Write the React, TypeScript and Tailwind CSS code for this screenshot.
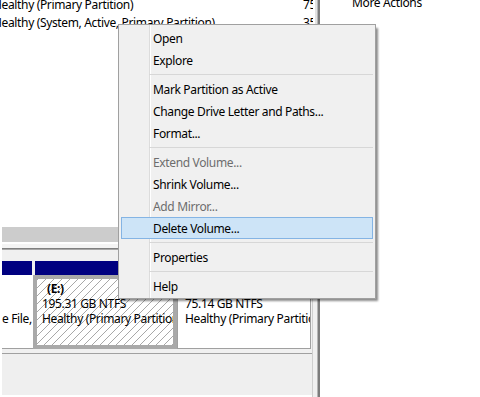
import React from 'react';

type Item = { t: string; dis?: boolean; hl?: boolean } | 'sep';

const items: Item[] = [
  { t: 'Open' },
  { t: 'Explore' },
  'sep',
  { t: 'Mark Partition as Active' },
  { t: 'Change Drive Letter and Paths...' },
  { t: 'Format...' },
  'sep',
  { t: 'Extend Volume...', dis: true },
  { t: 'Shrink Volume...' },
  { t: 'Add Mirror...', dis: true },
  { t: 'Delete Volume...', hl: true },
  'sep',
  { t: 'Properties' },
  'sep',
  { t: 'Help' },
];

function ContextMenu() {
  return (
    <div className="absolute left-[118px] top-[24px] w-[258px] h-[275px] border border-[#a0a0a0] pt-[2px] pb-[1px] flex flex-col bg-[#f0f0f0] bg-[image:linear-gradient(to_right,#f0f0f0_30px,#dcdcdc_30px,#dcdcdc_31px,#ffffff_31px,#ffffff_32px,#f0f0f0_32px)] shadow-[3px_3px_2px_-1px_rgba(0,0,0,0.45)]">
      {items.map((it, i) =>
        it === 'sep' ? (
          <div key={i} className="h-[7px] ml-[30px] mr-[2px] flex flex-col pt-[3px]">
            <div className="h-[1px] bg-[#d7d7d7]" />
          </div>
        ) : (
          <div
            key={i}
            className={
              it.hl
                ? 'h-[22px] mx-[2px] pl-[31px] flex items-center border border-[#84b4e4] bg-[#cde4f7] text-black'
                : it.dis
                ? 'h-[22px] mx-[2px] pl-[31px] flex items-center border border-transparent text-[#6d6d6d]'
                : 'h-[22px] mx-[2px] pl-[31px] flex items-center border border-transparent text-black'
            }
          >
            {it.t}
          </div>
        )
      )}
    </div>
  );
}

function ListRow({ a, b }: { a: string; b: string }) {
  return (
    <div className="h-[18px] leading-[18px] flex whitespace-nowrap">
      <div className="w-[303px] overflow-hidden">
        <span className="block -ml-[7px]">{a}</span>
      </div>
      <div className="w-[10px] overflow-hidden">{b}</div>
    </div>
  );
}

export default function App() {
  return (
    <div className="w-[480px] h-[397px] relative overflow-hidden bg-white flex text-[12px] leading-[15px] tracking-[-0.35px] text-black font-['Segoe_UI','Noto_Sans',sans-serif]">
      {/* left pane */}
      <div className="w-[317px] h-full flex flex-col">
        {/* volume list */}
        <div className="h-[227px] flex bg-white overflow-hidden">
          <div className="w-[315px] flex flex-col -mt-[4px]">
            <ListRow a="Healthy (Primary Partition)" b="75 GB" />
            <ListRow a="Healthy (System, Active, Primary Partition)" b="350 MB" />
          </div>
          <div className="w-[2px] bg-[#e3e3e3]" />
        </div>

        {/* graphical view */}
        <div className="flex-1 flex bg-white pl-[2px]">
          <div className="w-[310px] flex flex-col">
            <div className="h-[15px] bg-[#cccccc]" />
            <div className="h-[6px] bg-[#f4f4f4] border-t-2 border-white" />
            <div className="h-[2px] bg-[#808080] border-b border-[#a8a8a8]" />
            <div className="h-[11px] bg-[#f0f0f0]" />
            {/* navy header bars */}
            <div className="h-[14px] flex bg-[#f0f0f0]">
              <div className="w-[31px] pr-[1px]">
                <div className="h-full bg-[#000080]" />
              </div>
              <div className="w-[144px] px-[2px]">
                <div className="h-full bg-[#000080]" />
              </div>
              <div className="w-[134px] pl-[1px] pr-[1px]">
                <div className="h-full bg-[#000080]" />
              </div>
            </div>
            {/* partitions */}
            <div className="h-[74px] flex bg-[#f0f0f0]">
              <div className="w-[31px] h-[74px] bg-white border-b border-[#a0a0a0] overflow-hidden pt-[36px] pr-[8px] text-right whitespace-nowrap">
                e File,
              </div>
              <div className="w-[144px] h-[74px] border-[4px] border-[#a9a9a9] overflow-hidden whitespace-nowrap pt-[2px] pl-[5px] bg-[image:repeating-linear-gradient(135deg,#a8a8a8_0px,#a8a8a8_1px,#ffffff_1px,#ffffff_5.66px)]">
                <div className="font-bold pl-[5px]">(E:)</div>
                <div>195.31 GB NTFS</div>
                <div>Healthy (Primary Partition)</div>
              </div>
              <div className="w-[134px] h-[74px] bg-white border border-t-0 border-[#a0a0a0] overflow-hidden whitespace-nowrap pt-[6px] pl-[7px]">
                <div className="font-bold">(F:)</div>
                <div>75.14 GB NTFS</div>
                <div>Healthy (Primary Partition)</div>
              </div>
              <div className="flex-1" />
            </div>
            <div className="h-[4px] bg-[#f0f0f0]" />
            <div className="h-[1px] bg-[#a0a0a0]" />
            <div className="flex-1 bg-[#efefef]" />
            <div className="h-[2px] bg-white" />
          </div>
          <div className="w-[1px] bg-[#cfcfcf]" />
          <div className="flex-1 bg-[#f0f0f0]" />
        </div>
      </div>

      {/* splitter */}
      <div className="w-[3px] h-full bg-[#7c7c7c] border-l border-[#b5b5b5]" />

      {/* actions pane */}
      <div className="flex-1 h-full bg-white pl-[32px]">
        <div className="-mt-[5px] whitespace-nowrap">More Actions</div>
      </div>

      <ContextMenu />
    </div>
  );
}
